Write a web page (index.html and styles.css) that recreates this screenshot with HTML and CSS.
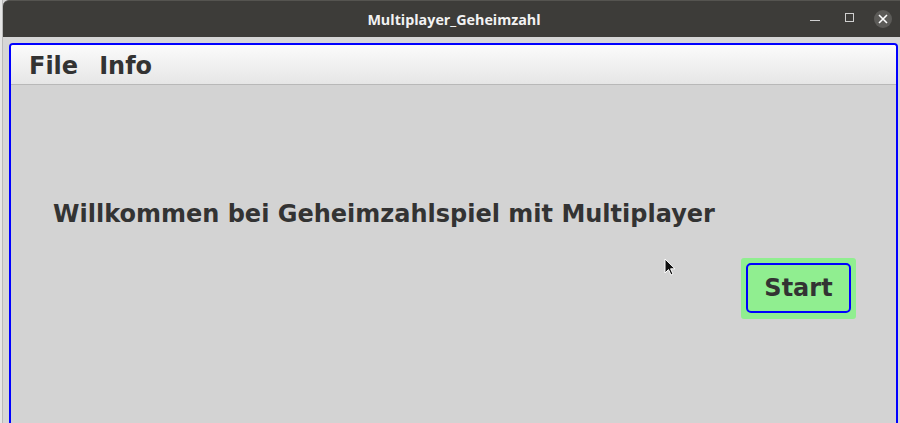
FILE: index.html
```html
<!DOCTYPE html>
<html>
<head>
<meta charset="utf-8">
<link rel="stylesheet" href="styles.css">
</head>
<body>
<div class="screen">
  <div class="behind"></div>
  <div class="window">
    <div class="titlebar">
      <div class="title">Multiplayer_Geheimzahl</div>
      <div class="controls">
        <svg class="ctl" width="34" height="20" viewBox="0 0 34 20"><line x1="12" y1="11.5" x2="22" y2="11.5" stroke="#cfcfcf" stroke-width="1"/></svg>
        <svg class="ctl" width="34" height="20" viewBox="0 0 34 20"><rect x="13.5" y="4.5" width="8" height="8" fill="none" stroke="#cfcfcf" stroke-width="1"/></svg>
        <svg class="ctl" width="34" height="20" viewBox="0 0 34 20"><circle cx="17" cy="10" r="9" fill="#5c5b58"/><path d="M13 6 L21 14 M21 6 L13 14" stroke="#ffffff" stroke-width="1.6"/></svg>
      </div>
    </div>
    <div class="frame">
      <div class="panel">
        <div class="menubar">
          <span class="menu">File</span>
          <span class="menu">Info</span>
        </div>
        <div class="content">
          <div class="welcome">Willkommen bei Geheimzahlspiel mit Multiplayer</div>
          <div class="action-row">
            <div class="btn-wrap"><div class="btn">Start</div></div>
          </div>
        </div>
      </div>
    </div>
  </div>
  <svg class="cursor" width="12" height="20" viewBox="0 0 12 20"><path d="M1 1 L1 15 L4.5 11.5 L7 17 L9 16 L6.6 10.8 L11 10.8 Z" fill="#111" stroke="#fff" stroke-width="1"/></svg>
</div>
</body>
</html>
```
FILE: styles.css
```css
html, body {
  margin: 0;
  padding: 0;
  width: 900px;
  height: 423px;
  overflow: hidden;
  background: #d6d6d6;
}
.screen {
  position: relative;
  display: flex;
  width: 900px;
  height: 423px;
}
.behind {
  width: 2px;
  background: #e6e6e6;
  border-right: 1px solid #b9b9b9;
  flex: none;
}
.window {
  flex: 1;
  display: flex;
  flex-direction: column;
  background: #d6d6d6;
}
.titlebar {
  height: 37px;
  background: #3d3c39;
  border-top-left-radius: 6px;
  border-top: 1px solid #555450;
  box-sizing: border-box;
  position: relative;
  display: flex;
  align-items: center;
  justify-content: center;
  flex: none;
}
.title {
  font-family: "Open Sans", "DejaVu Sans", sans-serif;
  font-weight: 700;
  font-size: 14.3px;
  color: #f2f2f2;
  margin-left: 5px;
  margin-top: 1px;
}
.controls {
  position: absolute;
  right: 0;
  top: 8px;
  display: flex;
}
.ctl {
  display: block;
}
.frame {
  flex: 1;
  padding: 6px 2px 0 6px;
  display: flex;
  min-height: 0;
}
.panel {
  flex: 1;
  border: 2px solid #0000ff;
  border-bottom: none;
  border-radius: 4px 4px 0 0;
  display: flex;
  flex-direction: column;
  overflow: hidden;
  background: #d3d3d3;
}
.menubar {
  height: 39px;
  border-bottom: 1px solid #b8b8b8;
  background: linear-gradient(#fbfbfb, #e6e6e6);
  display: flex;
  align-items: center;
  padding-left: 18px;
  gap: 21px;
  flex: none;
}
.menu {
  font-family: "DejaVu Sans", sans-serif;
  font-weight: 700;
  font-size: 24px;
  color: #333333;
  margin-top: 2px;
}
.content {
  flex: 1;
  background: #d3d3d3;
  display: flex;
  flex-direction: column;
  padding: 116px 40px 0 42px;
}
.welcome {
  font-family: "DejaVu Sans", sans-serif;
  font-weight: 700;
  font-size: 24px;
  color: #333333;
  line-height: 27px;
}
.action-row {
  display: flex;
  justify-content: flex-end;
  margin-top: 30px;
}
.btn-wrap {
  background: #90ee90;
  padding: 5px 5px 6px 5px;
  border-radius: 3px;
}
.btn {
  width: 101px;
  height: 46px;
  border: 2px solid #0000ff;
  border-radius: 5px;
  display: flex;
  align-items: center;
  justify-content: center;
  font-family: "DejaVu Sans", sans-serif;
  font-weight: 700;
  font-size: 24px;
  color: #333333;
}
.cursor {
  position: absolute;
  left: 664px;
  top: 258px;
}
```
